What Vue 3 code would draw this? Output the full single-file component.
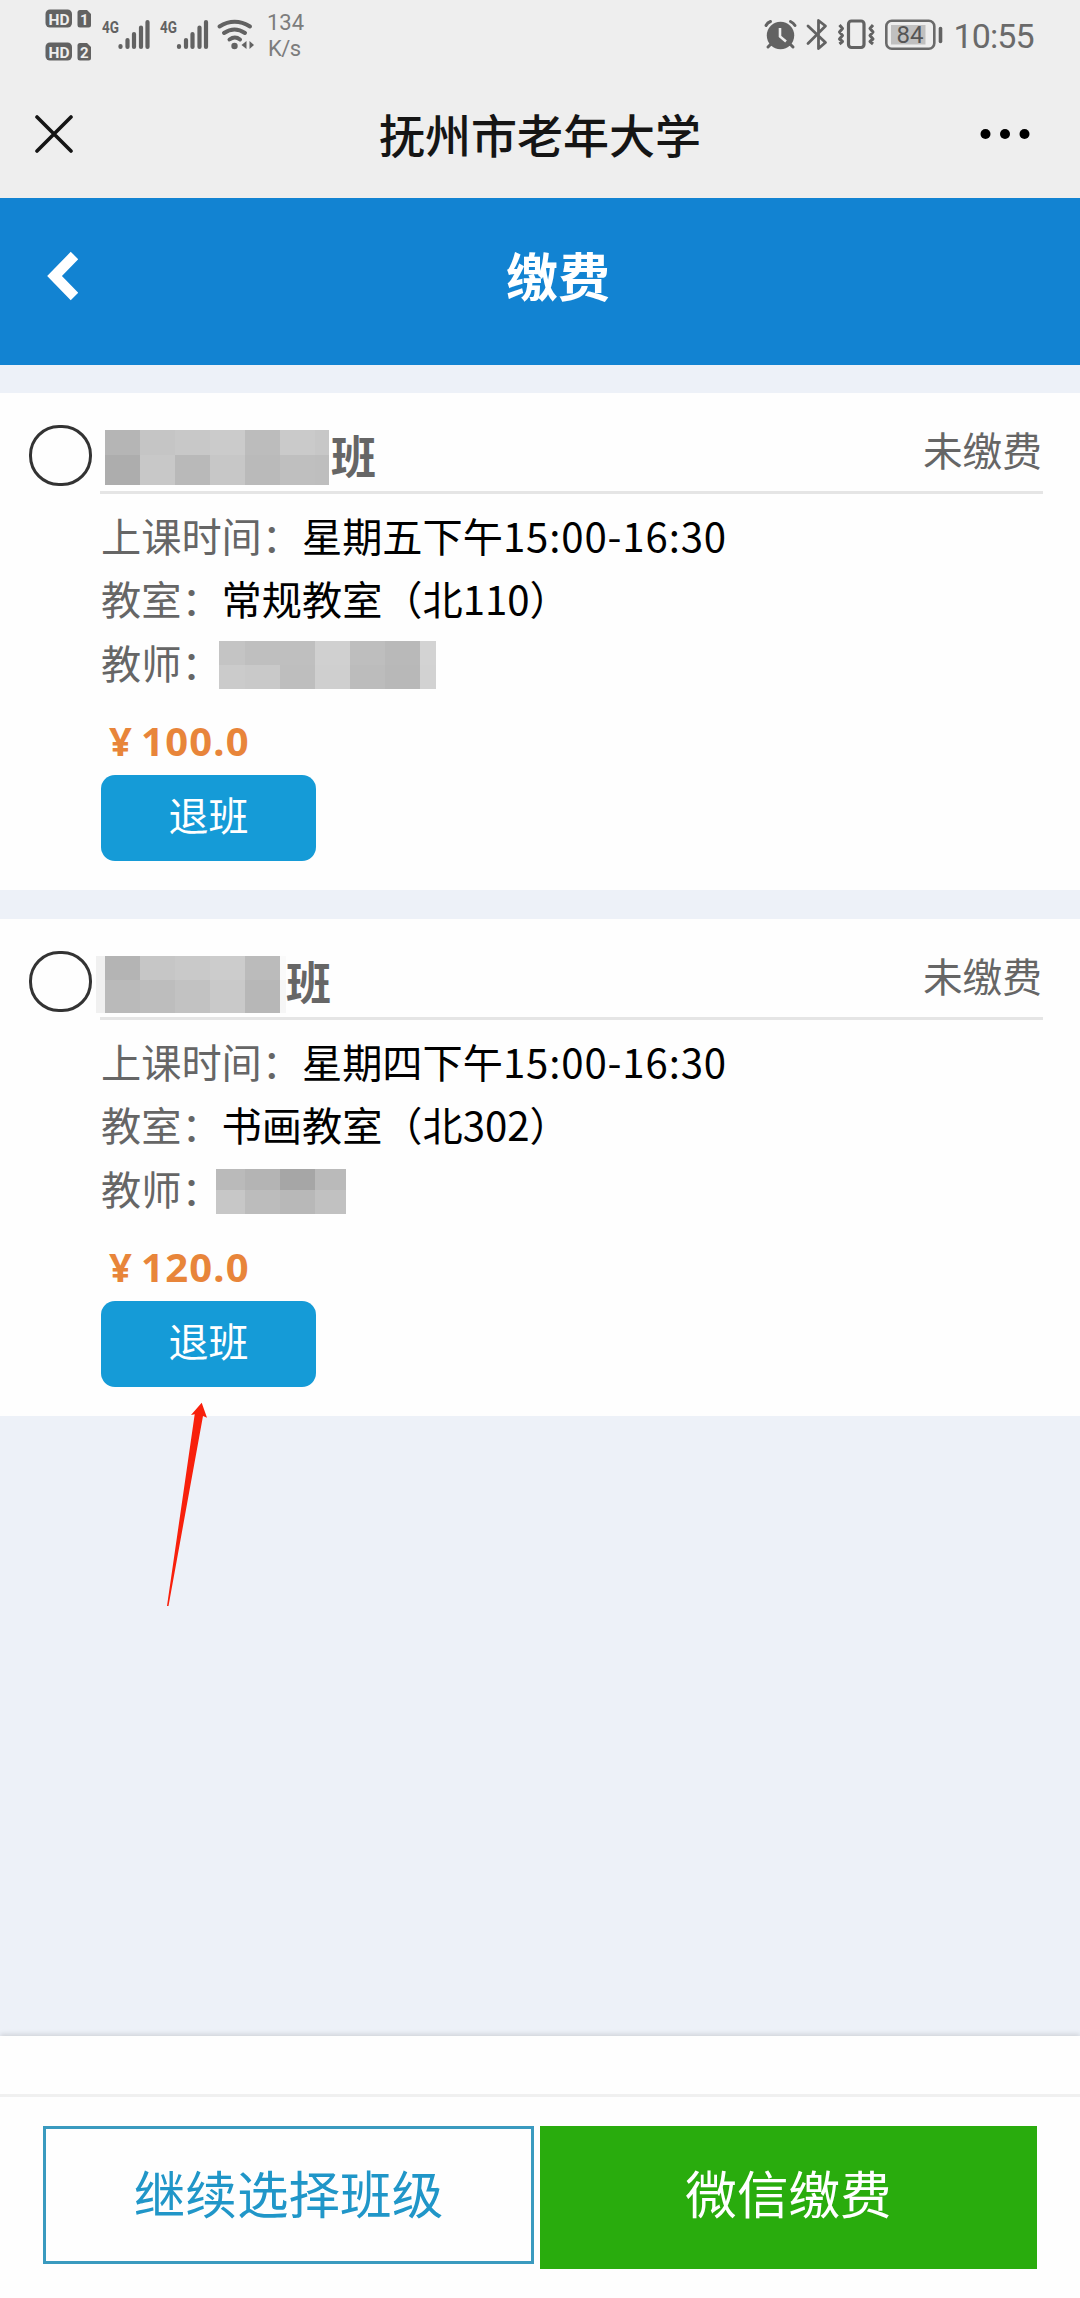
<script setup>
const courses = [
  {
    day: '星期五下午',
    time: '15:00-16:30',
    room: '常规教室（北110）',
    price: '100.0',
    name: {
      w: 224, h: 55, split: 25,
      xs: [0, 35, 70, 105, 140, 175, 210, 224],
      rows: [
        ['#b5b5b5', '#c5c5c5', '#c8c8c8', '#cbcbcb', '#bcbcbc', '#cacaca', '#c7c7c7'],
        ['#adadad', '#c8c8c8', '#b9b9b9', '#c7c7c7', '#bababa', '#bfbfbf', '#bebebe']
      ]
    },
    teacher: {
      w: 217, h: 48, split: 24,
      xs: [0, 26, 61, 96, 131, 166, 201, 217],
      rows: [
        ['#c4c4c4', '#bfbfbf', '#bfbfbf', '#d0d0d0', '#bebebe', '#b9b9b9', '#d3d3d3'],
        ['#cbcbcb', '#c9c9c9', '#bebebe', '#cfcfcf', '#bcbcbc', '#b8b8b8', '#d2d2d2']
      ]
    }
  },
  {
    day: '星期四下午',
    time: '15:00-16:30',
    room: '书画教室（北302）',
    price: '120.0',
    name: {
      w: 190, h: 57, split: 24,
      xs: [0, 9, 44, 79, 114, 149, 184, 190],
      rows: [
        ['#f0f0f0', '#b4b4b4', '#c6c6c6', '#c9c9c9', '#cccccc', '#bbbbbb', '#fafafa'],
        ['#f0f0f0', '#bababa', '#bdbdbd', '#c2c2c2', '#c9c9c9', '#b7b7b7', '#f6f6f6']
      ]
    },
    teacher: {
      w: 130, h: 45, split: 21,
      xs: [0, 29, 64, 99, 130],
      rows: [
        ['#bababa', '#b4b4b4', '#a6a6a6', '#bababa'],
        ['#c7c7c7', '#bcbcbc', '#b8b8b8', '#c1c1c1']
      ]
    }
  }
]

function tiles(m) {
  return m.rows.flatMap((row, r) =>
    row.map((fill, i) => ({
      x: m.xs[i],
      y: r ? m.split : 0,
      width: m.xs[i + 1] - m.xs[i],
      height: r ? m.h - m.split : m.split,
      fill
    }))
  )
}
</script>

<template>
  <div class="screen">
    <header class="system">
      <div class="status">
        <svg class="status-left" width="320" height="70" viewBox="0 0 320 70">
          <g fill="#626262">
            <rect x="45.500" y="9.500" width="26.500" height="18" rx="4.500" />
            <rect x="45.500" y="42.500" width="26.500" height="18" rx="4.500" />
            <path d="M80 10h7l4 4v11q0 2.500-2.500 2.500h-8.500q-2.500 0-2.500-2.500v-12.500q0-2.500 2.500-2.500z" />
            <path d="M80 43h7l4 4v11q0 2.500-2.500 2.500h-8.500q-2.500 0-2.500-2.500v-12.500q0-2.500 2.500-2.500z" />
          </g>
          <g class="tiny" fill="#eee">
            <text x="48.500" y="24.500" textLength="21" lengthAdjust="spacingAndGlyphs">HD</text>
            <text x="48.500" y="57.500" textLength="21" lengthAdjust="spacingAndGlyphs">HD</text>
            <text x="80" y="24.500">1</text>
            <text x="80" y="57.500">2</text>
          </g>
          <g class="gen" fill="#626262">
            <text x="102" y="32.500" textLength="17" lengthAdjust="spacingAndGlyphs">4G</text>
            <text x="160" y="32.500" textLength="17" lengthAdjust="spacingAndGlyphs">4G</text>
          </g>
          <g stroke="#626262" stroke-width="4.200" stroke-linecap="round">
            <path d="M120.500 46v1M127.500 40v7M134 34v13M141 27.500v19.500M147.500 22v25" />
            <path d="M179 46v1M186 40v7M192.500 34v13M199.500 27.500v19.500M206 22v25" />
          </g>
          <g fill="none" stroke="#626262" stroke-width="4" stroke-linecap="round">
            <path d="M219.500 26.500q15-9.500 30.500 0M224 33q10.500-7 21 0M229.500 39.500q5.500-4 10.500 0" />
          </g>
          <circle cx="234.500" cy="46" r="3.200" fill="#626262" />
          <path d="M246.500 41v8l-5-4zM249.500 41v8l4.500-4z" fill="#626262" />
          <g class="speed" fill="#7c7c7c">
            <text x="267" y="30" textLength="37">134</text>
            <text x="268" y="55.500" textLength="33">K/s</text>
          </g>
        </svg>
        <svg class="status-right" width="340" height="70" viewBox="0 0 340 70">
          <circle cx="40.500" cy="35.500" r="13.700" fill="#626262" />
          <path d="M26 25.500q1.500-3 4.500-4M50.500 21.500q3 1.500 4.500 4M31 44l-3 3M50 44l3 3" fill="none" stroke="#626262" stroke-width="3" stroke-linecap="round" />
          <path d="M40 28v8.500l6 5" fill="none" stroke="#eee" stroke-width="2.600" />
          <path d="M68 26l17.500 16.500-7 6v-28l7 5.500L68 43.500" fill="none" stroke="#626262" stroke-width="2.800" stroke-linejoin="round" stroke-linecap="round" />
          <rect x="108.500" y="21" width="15.500" height="26.500" rx="3" fill="none" stroke="#626262" stroke-width="3.200" />
          <path d="M99.500 25l3 3.500-3 3.500 3 3.500-3 3.500 3 2.500-3 2.500M133 25l-3 3.500 3 3.500-3 3.500 3 3.500-3 2.500 3 2.500" fill="none" stroke="#626262" stroke-width="3" stroke-linejoin="round" />
          <rect x="146.300" y="20.800" width="48" height="28" rx="5.500" fill="none" stroke="#6a6a6a" stroke-width="2.600" />
          <rect x="151" y="25" width="34.500" height="19.500" fill="#c0c0c0" />
          <path d="M200.500 28.500v13" stroke="#626262" stroke-width="3.600" stroke-linecap="round" />
          <text class="charge" x="156.500" y="43" textLength="27">84</text>
          <text class="clock" x="213.500" y="48" textLength="81">10:55</text>
        </svg>
      </div>
      <div class="nav">
        <svg width="38" height="38" viewBox="0 0 38 38">
          <path d="M2 2l34 34M36 2L2 36" stroke="#151515" stroke-width="3.600" stroke-linecap="round" />
        </svg>
        <span class="nav-title">抚州市老年大学</span>
        <svg width="50" height="12" viewBox="0 0 50 12">
          <circle cx="5.500" cy="6" r="5" /><circle cx="25" cy="6" r="5" /><circle cx="44.500" cy="6" r="5" />
        </svg>
      </div>
    </header>

    <div class="page-head">
      <svg width="33" height="50" viewBox="0 0 33 50">
        <path d="M29.500 4.500L9.500 25l20 20.500" fill="none" stroke="#fff" stroke-width="10.500" />
      </svg>
      <h1>缴费</h1>
    </div>

    <main>
      <section v-for="(c, i) in courses" :key="i" class="card">
        <span class="radio"></span>
        <div class="body">
          <div class="top">
            <svg class="name" :class="'name-' + i" :width="c.name.w" :height="c.name.h" shape-rendering="crispEdges">
              <rect v-for="(t, k) in tiles(c.name)" :key="k" v-bind="t" />
            </svg>
            <strong>班</strong>
            <span class="state">未缴费</span>
          </div>
          <div class="row"><span>上课时间：</span><b>{{ c.day }}</b><b class="time">{{ c.time }}</b></div>
          <div class="row"><span>教室：</span><b>{{ c.room }}</b></div>
          <div class="row">
            <span>教师：</span>
            <svg class="teacher" :class="'teacher-' + i" :width="c.teacher.w" :height="c.teacher.h" shape-rendering="crispEdges">
              <rect v-for="(t, k) in tiles(c.teacher)" :key="k" v-bind="t" />
            </svg>
          </div>
          <div class="price"><span>¥</span><span>{{ c.price }}</span></div>
          <button class="quit">退班</button>
        </div>
      </section>
      <svg class="arrow" width="50" height="210" viewBox="0 0 50 210">
        <path d="M41.700 2.700L31 15l3.700-.7L7 206h1.500L43 16l4 1.700z" fill="#f8200c" />
      </svg>
    </main>

    <footer>
      <div class="strip"></div>
      <div class="actions">
        <button class="more">继续选择班级</button>
        <button class="pay">微信缴费</button>
      </div>
    </footer>
  </div>
</template>

<style>
body {
  margin: 0;
}
</style>

<style scoped>
.screen {
  width: 1080px;
  height: 2298px;
  display: flex;
  flex-direction: column;
  overflow: hidden;
  background: #edf1f8;
  font-family: "Noto Sans CJK SC", sans-serif;
  box-sizing: border-box;
}
.screen * {
  box-sizing: border-box;
}
svg {
  display: block;
  flex: none;
}
button {
  font-family: inherit;
  padding: 0;
  border: 0;
}
.system {
  height: 198px;
  background: #eee;
}
.status {
  display: flex;
  justify-content: space-between;
  height: 70px;
}
.tiny {
  font: 700 15px Roboto, sans-serif;
}
.gen {
  font: 700 17px Roboto, sans-serif;
}
.speed {
  font: 400 22px Roboto, sans-serif;
}
.charge {
  font: 400 24px Roboto, sans-serif;
  fill: #555;
}
.clock {
  font: 400 34px Roboto, sans-serif;
  fill: #6a6a6a;
}
.nav {
  height: 128px;
  padding: 0 50px 0 35px;
  display: flex;
  align-items: center;
  justify-content: space-between;
}
.nav-title {
  font-size: 46px;
  font-weight: 500;
  line-height: 60px;
  color: #151515;
  margin: 0 0 3px 27px;
}
.page-head {
  height: 167px;
  background: #1283d2;
  display: flex;
  align-items: center;
  padding: 0 45px;
}
.page-head svg {
  margin-bottom: 12px;
}
h1 {
  margin: 0 0 13px 428px;
  font-size: 52px;
  line-height: 70px;
  font-weight: 700;
  color: #fff;
}
main {
  position: relative;
  flex: 1;
  padding-top: 28px;
  display: flex;
  flex-direction: column;
  gap: 29px;
}
.card {
  height: 497px;
  background: #fefefe;
  display: flex;
  padding: 0 37px 0 29px;
}
.radio {
  width: 63px;
  height: 61px;
  margin: 32px 8px 0 0;
  border: 3px solid #333;
  border-radius: 30px;
}
.body {
  flex: 1;
}
.top {
  height: 101px;
  border-bottom: 3px solid #e5e5e5;
  display: flex;
}
.name-0 {
  margin: 37px 2px 0 5px;
}
.name-1 {
  margin: 37px 0 0 -4px;
}
.top strong {
  font-size: 45px;
  line-height: 60px;
  margin-top: 32px;
  color: #666;
}
.state {
  margin: 26px 1px 0 auto;
  font-size: 39.700px;
  line-height: 60px;
  color: #666;
}
.row {
  height: 63.300px;
  line-height: 62px;
  font-size: 40.200px;
  display: flex;
  white-space: nowrap;
  color: #666;
  padding-left: 1px;
}
.top + .row {
  margin-top: 10px;
}
.row b {
  font-weight: 400;
  color: #000;
}
.row .time {
  letter-spacing: 0.850px;
}
.teacher-0 {
  margin: 10px 0 0 -3px;
}
.teacher-1 {
  margin: 12px 0 0 -6px;
}
.price {
  margin-top: 14px;
  height: 66px;
  padding-left: 9px;
  display: flex;
  gap: 8px;
  font: 700 40px/66px "Noto Sans", sans-serif;
  letter-spacing: 1.200px;
  color: #e8853a;
}
.quit {
  display: block;
  margin-left: 1px;
  margin-top: 1px;
  width: 215px;
  height: 86px;
  border-radius: 14px;
  background: #159bd7;
  color: #fff;
  font-size: 40px;
  line-height: 58px;
  padding-bottom: 8px;
}
.arrow {
  position: absolute;
  left: 160px;
  top: 1035px;
}
footer {
  height: 262px;
  background: #fefefe;
  box-shadow: 0 -2px 5px rgba(0, 0, 0, 0.12);
  position: relative;
}
.strip {
  height: 61px;
  border-bottom: 3px solid #f0f0f0;
}
.actions {
  display: flex;
  align-items: flex-start;
  padding: 29px 43px 0;
  gap: 6px;
}
.more {
  width: 491px;
  height: 138px;
  border: 3px solid #3a9abf;
  background: #fefefe;
  color: #2096c8;
  font-size: 51.600px;
  padding-bottom: 8px;
}
.pay {
  width: 497px;
  height: 143px;
  background: #29ac0d;
  color: #fff;
  font-size: 51.600px;
  padding-bottom: 13px;
}
</style>
